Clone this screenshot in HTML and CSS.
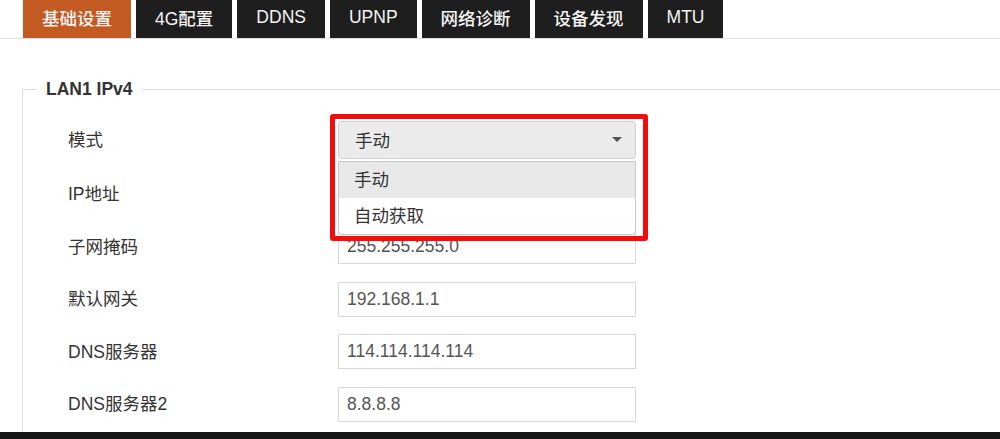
FILE: index.html
```html
<!DOCTYPE html>
<html lang="zh-CN">
<head>
<meta charset="utf-8">
<title>基础设置</title>
<link rel="stylesheet" href="styles.css">
</head>
<body>
<nav class="tabs">
  <a class="tab active">基础设置</a>
  <a class="tab">4G配置</a>
  <a class="tab">DDNS</a>
  <a class="tab">UPNP</a>
  <a class="tab">网络诊断</a>
  <a class="tab">设备发现</a>
  <a class="tab">MTU</a>
</nav>
<fieldset class="panel">
  <legend class="panel-title">LAN1 IPv4</legend>
  <div class="form">
    <div class="row">
      <label class="label">模式</label>
      <div class="select-wrap">
        <div class="select">手动<span class="caret"></span></div>
        <ul class="menu">
          <li class="option hl">手动</li>
          <li class="option">自动获取</li>
        </ul>
        <div class="mark"></div>
      </div>
    </div>
    <div class="row">
      <label class="label">IP地址</label>
      <input class="field" type="text" value="192.168.1.1">
    </div>
    <div class="row">
      <label class="label">子网掩码</label>
      <input class="field" type="text" value="255.255.255.0">
    </div>
    <div class="row">
      <label class="label">默认网关</label>
      <input class="field" type="text" value="192.168.1.1">
    </div>
    <div class="row">
      <label class="label">DNS服务器</label>
      <input class="field" type="text" value="114.114.114.114">
    </div>
    <div class="row">
      <label class="label">DNS服务器2</label>
      <input class="field" type="text" value="8.8.8.8">
    </div>
  </div>
</fieldset>
<div class="bottom-bar"></div>
</body>
</html>
```
FILE: styles.css
```css
html, body {
  margin: 0;
  padding: 0;
  background: #fff;
  overflow: hidden;
}
body {
  font-family: "Liberation Sans", "Noto Sans CJK SC", sans-serif;
  font-size: 17.5px;
  color: #333;
}
.tabs {
  display: flex;
  gap: 5px;
  padding-left: 23px;
  border-bottom: 1px solid #e0e0e0;
}
.tab {
  box-sizing: border-box;
  display: flex;
  align-items: center;
  height: 38px;
  padding: 0 19px 3px;
  background: #1e1e1e;
  color: #f4f4f4;
  font-size: 17.5px;
  font-weight: 500;
  white-space: nowrap;
}
.tab.active {
  background: #c35a22;
}
.panel {
  margin: 40px -30px 0 22px;
  border: 1px solid #dcdcdc;
  padding: 22px 0 14px 14px;
  min-width: 0;
}
.panel-title {
  padding: 0 9px;
  font-weight: bold;
  font-size: 17.5px;
  line-height: 20px;
  color: #333;
}
.form {
  display: flex;
  flex-direction: column;
  gap: 17.5px;
  padding-left: 31px;
}
.row {
  display: flex;
  align-items: center;
  min-height: 35px;
}
.label {
  width: 270px;
  flex: none;
  color: #333;
  padding-bottom: 3px;
}
.field {
  box-sizing: border-box;
  width: 298px;
  height: 35px;
  margin: 0;
  padding: 0 8px;
  border: 1px solid #d8d8d8;
  border-radius: 0;
  font-family: inherit;
  font-size: 17.5px;
  color: #555;
  background: #fff;
  outline: none;
}
.select-wrap {
  position: relative;
  width: 298px;
}
.select {
  box-sizing: border-box;
  display: flex;
  align-items: center;
  justify-content: space-between;
  height: 38px;
  padding: 0 13px 2px 16px;
  background: #ebebeb;
  border: 1px solid #cfcfcf;
  border-radius: 4px;
  color: #333;
}
.caret {
  width: 0;
  height: 0;
  border-left: 5px solid transparent;
  border-right: 5px solid transparent;
  border-top: 5px solid #555;
}
.menu {
  position: absolute;
  left: 0;
  top: 40px;
  z-index: 2;
  box-sizing: border-box;
  width: 298px;
  margin: 0;
  padding: 0;
  list-style: none;
  background: #fff;
  border: 1px solid #c8c8c8;
  border-radius: 0 0 4px 4px;
  overflow: hidden;
}
.option {
  box-sizing: border-box;
  display: flex;
  align-items: center;
  height: 36px;
  padding: 0 0 3px 15px;
  color: #333;
}
.option.hl {
  background: #e8e8e8;
}
.mark {
  position: absolute;
  left: -8px;
  top: -7px;
  z-index: 3;
  box-sizing: border-box;
  width: 318px;
  height: 127px;
  border: 5px solid #f20c0c;
  border-radius: 3px;
}
.bottom-bar {
  position: fixed;
  left: 0;
  right: 0;
  bottom: 0;
  height: 7px;
  background: #151515;
}
```
